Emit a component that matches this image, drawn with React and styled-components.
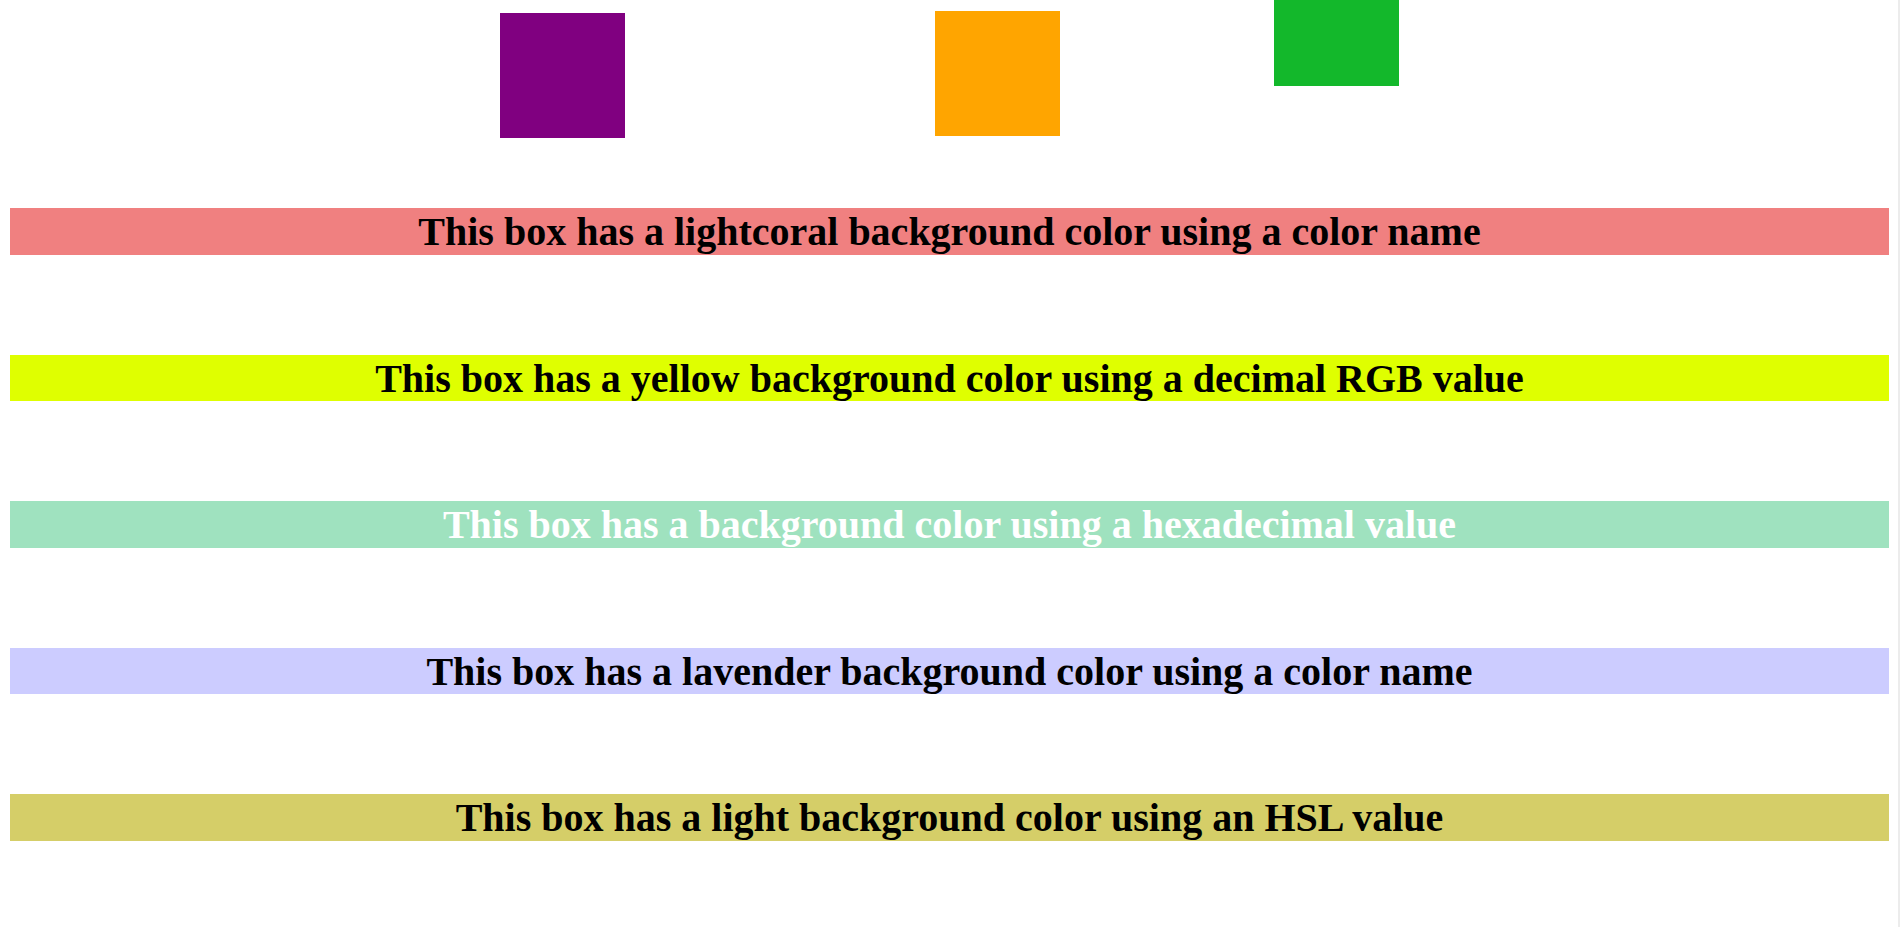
import React from 'react';
import styled, { createGlobalStyle } from 'styled-components';

const squares = [
  { color: '#800080', left: 500, top: 13 },
  { color: '#ffa500', left: 310, top: 11 },
  { color: '#13b82b', left: 214, top: -39 },
];

const boxes = [
  { bg: '#f08080', fg: '#000', text: 'This box has a lightcoral background color using a color name' },
  { bg: 'rgb(223, 255, 0)', fg: '#000', text: 'This box has a yellow background color using a decimal RGB value' },
  { bg: '#9fe2bf', fg: '#fff', text: 'This box has a background color using a hexadecimal value' },
  { bg: '#ccccff', fg: '#000', text: 'This box has a lavender background color using a color name' },
  { bg: 'rgb(213, 206, 104)', fg: '#000', text: 'This box has a light background color using an HSL value' },
];

const App = () => {
  return (
    <>
      <GlobalStyle />
      <Page>
        <SquareRow>
          {squares.map((sq, i) => (
            <Square key={i} color={sq.color} left={sq.left} top={sq.top} />
          ))}
        </SquareRow>
        <BoxList>
          {boxes.map((box, i) => (
            <ColorBox key={i} bg={box.bg} fg={box.fg}>
              {box.text}
            </ColorBox>
          ))}
        </BoxList>
      </Page>
    </>
  );
};

export default App;

const GlobalStyle = createGlobalStyle`
  html, body {
    margin: 0;
    padding: 0;
    background: #fff;
  }
  body {
    font-family: "Liberation Serif", "Times New Roman", serif;
  }
`;

const Page = styled.div`
  min-height: 927px;
  border-right: 2px solid #ececec;
  box-sizing: border-box;
  overflow: hidden;
`;

const SquareRow = styled.div`
  display: flex;
  align-items: flex-start;
  height: 208px;
`;

const Square = styled.div`
  flex: none;
  width: 125px;
  height: 125px;
  margin-left: ${({ left }) => left}px;
  margin-top: ${({ top }) => top}px;
  background: ${({ color }) => color};
`;

const BoxList = styled.div`
  display: flex;
  flex-direction: column;
  gap: 100px;
  padding: 0 9px 0 10px;
`;

const ColorBox = styled.div`
  background: ${({ bg }) => bg};
  color: ${({ fg }) => fg};
  font-size: 40px;
  font-weight: bold;
  line-height: 44.6px;
  padding-top: 2px;
  text-align: center;
`;
